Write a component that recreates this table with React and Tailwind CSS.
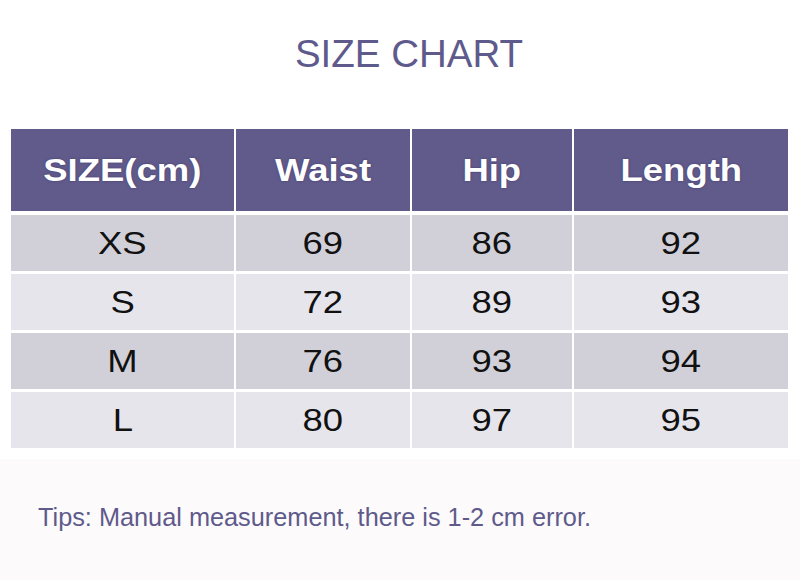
const headers = ["SIZE(cm)", "Waist", "Hip", "Length"];

const rows = [
  ["XS", "69", "86", "92"],
  ["S", "72", "89", "93"],
  ["M", "76", "93", "94"],
  ["L", "80", "97", "95"],
];

export default function App() {
  return (
    <div className="w-[800px] h-[580px] bg-white flex flex-col font-['Liberation_Sans',Arial,sans-serif] overflow-hidden">
      <h1 className="pt-[34px] pl-[18px] text-center text-[38.5px] leading-[39px] text-[#5f5a8c] font-normal">SIZE CHART</h1>

      <div className="mt-[56px] ml-[11px] w-[777px] grid grid-cols-[223px_174px_160px_214px] gap-x-[2px]">
        {headers.map((h) => (
          <div key={h} className="h-[82px] bg-[#615b8c] flex items-center justify-center">
            <span className="inline-block scale-x-[1.14] text-white font-bold text-[32px] leading-none [text-shadow:0_0_2px_rgba(40,30,80,0.6)]">
              {h}
            </span>
          </div>
        ))}
      </div>

      <div className="mt-[4px] ml-[11px] w-[777px] flex flex-col gap-y-[3px]">
        {rows.map((r, i) => (
          <div key={i} className="grid grid-cols-[223px_174px_160px_214px] gap-x-[2px]">
            {r.map((c, j) => (
              <div
                key={j}
                className={`h-[56px] flex items-center justify-center ${i % 2 === 0 ? "bg-[#d1d0d9]" : "bg-[#e6e5ec]"}`}
              >
                <span className="inline-block scale-x-[1.14] text-[#111] text-[32px] leading-none">{c}</span>
              </div>
            ))}
          </div>
        ))}
      </div>

      <div className="mt-[11px] flex-1 bg-[#fcfafb] pt-[46px] pl-[38px]">
        <p className="text-[25.3px] leading-[25px] text-[#5f5a8c]">Tips: Manual measurement, there is 1-2 cm error.</p>
      </div>
    </div>
  );
}
